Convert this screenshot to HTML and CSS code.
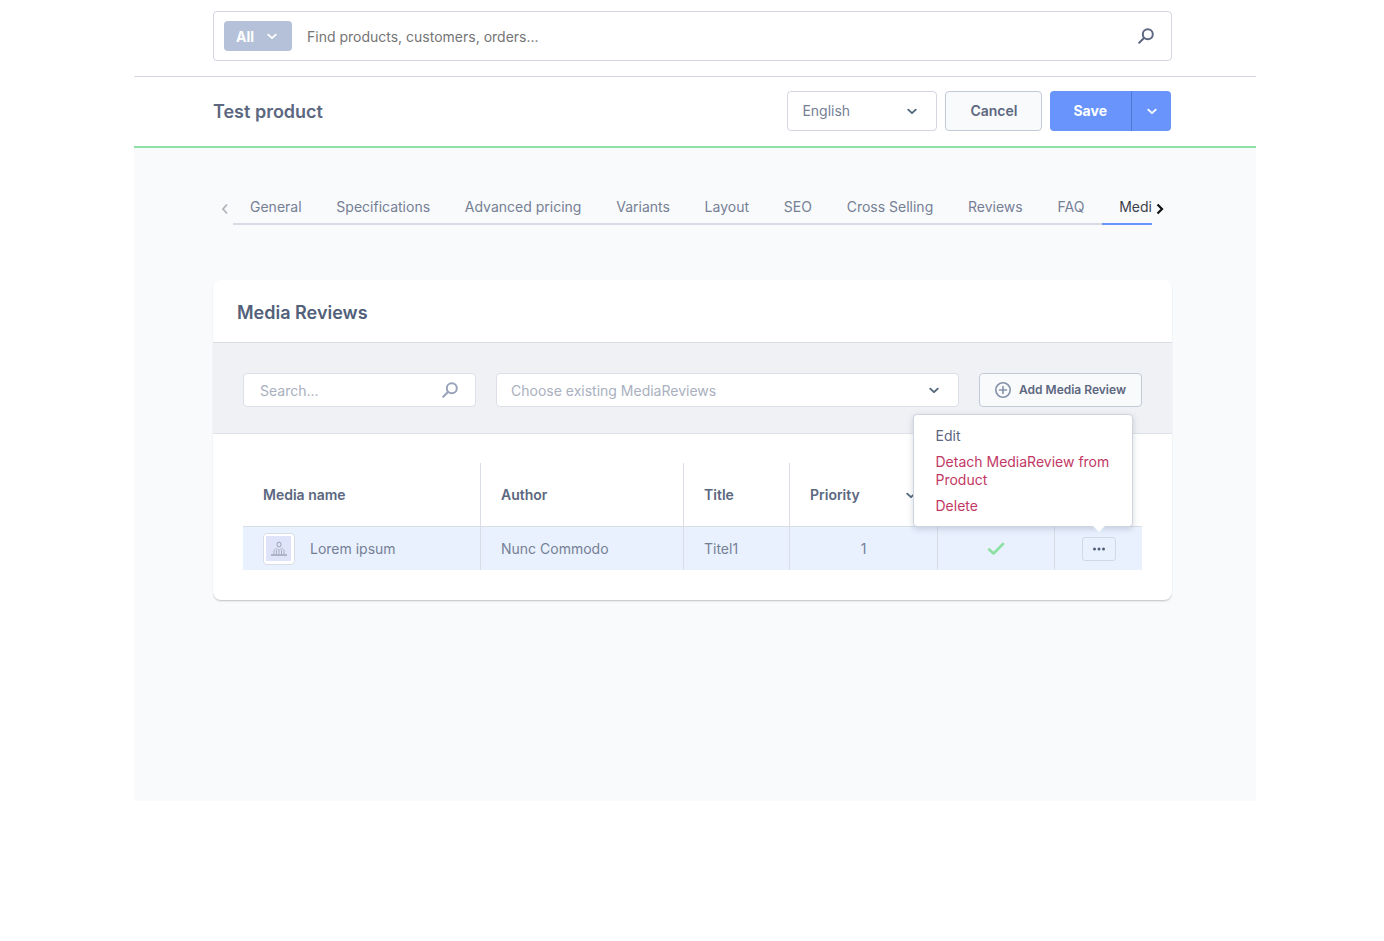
FILE: index.html
```html
<!DOCTYPE html>
<html lang="en">
<head>
<meta charset="utf-8">
<title>Test product</title>
<link rel="stylesheet" href="styles.css">
</head>
<body>
<svg class="sprite" aria-hidden="true">
  <symbol id="chevron" viewBox="0 0 12 12"><path d="M2.200 4.600 6 8.200l3.800-3.600" fill="none" stroke="currentColor" stroke-width="1.800" stroke-linecap="round" stroke-linejoin="round"/></symbol>
  <symbol id="search" viewBox="0 0 16 16"><circle cx="9.800" cy="6.200" r="5" fill="none" stroke="currentColor" stroke-width="2"/><path d="M6 10 1.200 14.800" fill="none" stroke="currentColor" stroke-width="2" stroke-linecap="round"/></symbol>
</svg>
<div class="app">
  <header class="topbar">
    <form class="global-search">
      <span class="picker picker-type">
        <select aria-label="Search scope"><option>All</option></select>
        <svg class="icon-chevron"><use href="#chevron"/></svg>
      </span>
      <input type="text" aria-label="Search" placeholder="Find products, customers, orders...">
      <button class="icon-button" type="button" aria-label="Search"><svg class="icon-search"><use href="#search"/></svg></button>
    </form>
  </header>
  <div class="titlebar">
    <h1>Test product</h1>
    <span class="picker picker-language">
      <select aria-label="Language"><option>English</option></select>
      <svg class="icon-chevron"><use href="#chevron"/></svg>
    </span>
    <button class="btn" type="button">Cancel</button>
    <div class="split">
      <button class="split-main" type="button">Save</button>
      <button class="split-more" type="button" aria-label="More save options"><svg class="icon-chevron"><use href="#chevron"/></svg></button>
    </div>
  </div>
  <main class="content">
    <div class="tabbar">
      <button class="tab-arrow tab-prev" type="button" aria-label="Previous tabs"><svg viewBox="0 0 8 12"><path d="M6 1.500 2 6l4 4.500" fill="none" stroke="currentColor" stroke-width="1.800"/></svg></button>
      <nav class="tabs">
        <a href="#">General</a>
        <a href="#">Specifications</a>
        <a href="#">Advanced pricing</a>
        <a href="#">Variants</a>
        <a href="#">Layout</a>
        <a href="#">SEO</a>
        <a href="#">Cross Selling</a>
        <a href="#">Reviews</a>
        <a href="#">FAQ</a>
        <a href="#" class="active">Medi</a>
      </nav>
      <button class="tab-arrow tab-next" type="button" aria-label="Next tabs"><svg viewBox="0 0 8 12"><path d="M1.500 1.500 6 6 1.500 10.500" fill="none" stroke="currentColor" stroke-width="2.200"/></svg></button>
    </div>
    <section class="card">
      <h2>Media Reviews</h2>
      <div class="toolbar">
        <div class="filter">
          <input type="text" aria-label="Search media reviews" placeholder="Search...">
          <svg class="icon-search"><use href="#search"/></svg>
        </div>
        <span class="picker picker-existing">
          <select aria-label="Existing media reviews"><option>Choose existing MediaReviews</option></select>
          <svg class="icon-chevron"><use href="#chevron"/></svg>
        </span>
        <button class="btn btn-small" type="button">
          <svg class="icon-plus" viewBox="0 0 16 16"><g fill="none" stroke="currentColor" stroke-width="1.600" stroke-linecap="round"><circle cx="8" cy="8" r="7.200"/><path d="M8 4.500v7M4.500 8h7"/></g></svg>
          Add Media Review
        </button>
      </div>
      <div class="grid-wrap">
        <table>
          <colgroup><col class="c-name"><col class="c-author"><col class="c-title"><col class="c-priority"><col class="c-active"><col class="c-menu"></colgroup>
          <thead>
            <tr>
              <th>Media name</th>
              <th>Author</th>
              <th>Title</th>
              <th><div class="sortable">Priority <svg class="icon-chevron"><use href="#chevron"/></svg></div></th>
              <th></th>
              <th></th>
            </tr>
          </thead>
          <tbody>
            <tr>
              <td>
                <div class="media">
                  <svg class="thumb" viewBox="0 0 32 32">
                    <rect x=".5" y=".5" width="31" height="31" rx="3.500" fill="#fff" stroke="#d8dde6"/>
                    <rect x="3" y="3" width="25" height="25" fill="#dfe4fa"/>
                    <g fill="none" stroke="#9a9fb0">
                      <ellipse cx="16" cy="11.500" rx="2" ry="2.500"/>
                      <path d="M13.500 15 11 17.500V21M18.500 15 21 17.500V21M14 15.500l2 2 2-2M13.500 21v-4M18.500 21v-4M16 17.500V21" stroke-width=".8"/>
                      <path d="M8 22h16" stroke-width="1.400"/>
                    </g>
                  </svg>
                  <span>Lorem ipsum</span>
                </div>
              </td>
              <td>Nunc Commodo</td>
              <td>Titel1</td>
              <td class="center">1</td>
              <td class="center"><svg class="icon-check" viewBox="0 0 18 14" role="img" aria-label="Active"><path d="M2.200 7.500 6.500 11.500 16 2" fill="none" stroke="#8be0a4" stroke-width="2.600" stroke-linecap="round" stroke-linejoin="round"/></svg></td>
              <td class="center">
                <div class="row-menu">
                  <button class="dots" type="button" aria-label="Row actions"><svg viewBox="0 0 14 4"><g fill="currentColor"><circle cx="2.500" cy="2" r="1.500"/><circle cx="7" cy="2" r="1.500"/><circle cx="11.500" cy="2" r="1.500"/></g></svg></button>
                  <div class="popover">
                    <button type="button">Edit</button>
                    <button class="danger" type="button">Detach MediaReview from Product</button>
                    <button class="danger" type="button">Delete</button>
                  </div>
                </div>
              </td>
            </tr>
          </tbody>
        </table>
      </div>
    </section>
  </main>
</div>
</body>
</html>
```
FILE: styles.css
```css
* { box-sizing: border-box; }

body {
  margin: 0;
  padding: 0 128px 0 134px;
  background: #fff;
  color: #758095;
  font: 14px/18px Inter, "Liberation Sans", sans-serif;
}

button, input, select { font: inherit; color: inherit; }
button { padding: 0; border: 0; background: none; cursor: pointer; }
svg { display: block; flex: none; }
.sprite { display: none; }
.icon-chevron { width: 12px; height: 12px; color: #52667a; }
.icon-search { width: 16px; height: 16px; }

.topbar {
  padding: 11px 84px 15px 79px;
  border-bottom: 1px solid #d3d6e0;
}

.global-search {
  display: flex;
  align-items: center;
  height: 50px;
  padding: 0 17px 0 10px;
  border: 1px solid #d3d6e0;
  border-radius: 4px;
}

.global-search input {
  flex: 1;
  min-width: 0;
  padding: 2px 15px 0;
  border: 0;
  outline: 0;
  background: none;
}
.global-search input::placeholder { color: #757575; }
.icon-button { color: #5c6780; }

/* Select with its own chevron stacked in the same grid cell */
.picker { display: grid; align-items: center; }
.picker > * { grid-area: 1 / 1; }
.picker select {
  width: 100%;
  height: 100%;
  padding: 0 14px;
  border: 1px solid #d3d6e0;
  border-radius: 4px;
  background: #fff;
  appearance: none;
}
.picker .icon-chevron {
  justify-self: end;
  margin-right: 19px;
  pointer-events: none;
}

.picker-type { width: 68px; height: 30px; }
.picker-type select {
  padding: 2px 12px 0;
  border: 0;
  background: #b5c1d9;
  color: #fff;
  font-weight: 700;
}
.picker-type .icon-chevron { margin-right: 14px; color: #fff; }

.titlebar {
  display: flex;
  align-items: center;
  gap: 8px;
  padding: 14px 85px 15px 79px;
  border-bottom: 2px solid #8fdfa8;
}

h1, h2 { margin: 0; font-size: 18px; line-height: 24px; font-weight: 600; }
h1 { flex: 1; padding-top: 2px; color: #5c6780; }

.picker-language { width: 150px; height: 40px; }

.btn {
  height: 40px;
  padding: 0 24px;
  border: 1px solid #c2cad8;
  border-radius: 4px;
  background: #f9fafb;
  color: #5c6780;
  font-weight: 600;
}

.split { display: flex; height: 40px; color: #fff; font-weight: 700; }
.split button { background: #6894fb; }
.split-main { padding: 0 24px 0 23px; border-radius: 4px 0 0 4px; }
.split .split-more {
  width: 40px;
  padding: 0 14px;
  border-left: 1px solid #5079d4;
  border-radius: 0 4px 4px 0;
}
.split .icon-chevron { color: #fff; }

.content {
  min-height: 653px;
  padding: 45px 84px 48px 79px;
  background: #f9fafc;
}

.tabbar { display: flex; align-items: flex-end; height: 32px; }
.tab-arrow { height: 32px; }
.tab-arrow svg { width: 8px; height: 12px; }
.tab-prev { width: 20px; padding-left: 8px; color: #b0b3ba; }
.tab-next { width: 20px; padding-left: 4px; color: #111; }

.tabs {
  flex: 1;
  display: flex;
  justify-content: space-between;
  min-width: 0;
  overflow: hidden;
  white-space: nowrap;
  box-shadow: inset 0 -2px #d8dbe4;
}
.tabs a {
  flex: none;
  padding: 2px 17px 7px;
  border-bottom: 2px solid transparent;
  color: inherit;
  text-decoration: none;
}
.tabs .active { padding-right: 0; border-color: #6894fb; color: #3b3f4d; }

.card {
  margin-top: 55px;
  border-radius: 8px;
  background: #fff;
  box-shadow: 0 1px 1px rgba(0, 0, 0, .14), 0 2px 2px rgba(0, 0, 0, .06);
}
.card h2 { padding: 21px 24px 17px; color: #52607a; }

.toolbar {
  display: flex;
  gap: 20px;
  padding: 30px 30px 26px;
  border-top: 1px solid #d9dce3;
  border-bottom: 1px solid #dfe2ea;
  background: #f0f1f5;
}
.filter {
  display: flex;
  align-items: center;
  width: 233px;
  height: 34px;
  padding: 0 17px 0 16px;
  border: 1px solid #dcdfe8;
  border-radius: 4px;
  background: #fff;
  color: #98a3b8;
}
.filter input {
  flex: 1;
  min-width: 0;
  padding: 2px 0 0;
  border: 0;
  outline: 0;
  background: none;
}
.filter input::placeholder { color: #a9b0c0; }
.picker-existing { flex: 1; height: 34px; color: #a9b0c0; }
.picker-existing select { padding-top: 2px; border-color: #dcdfe8; }

.btn-small {
  display: flex;
  align-items: center;
  gap: 8px;
  height: 34px;
  padding: 0 15px;
  font-size: 12px;
}
.icon-plus { width: 16px; height: 16px; color: #8592aa; }

.grid-wrap { padding: 29px 30px 30px; }
table { width: 100%; border-collapse: separate; border-spacing: 0; table-layout: fixed; }
.c-name { width: 238px; }
.c-author { width: 203px; }
.c-title { width: 106px; }
.c-priority { width: 148px; }
.c-active { width: 117px; }
.c-menu { width: 87px; }

th, td { padding: 0 20px; border-right: 1px solid #d8dde6; text-align: left; }
th:last-child, td:last-child { border-right: 0; }
th { height: 64px; border-bottom: 1px solid #d8dde6; color: #5c6780; font-weight: 600; }
td { height: 43px; background: #e9f1fe; }
.center { text-align: center; }
.sortable { display: flex; align-items: center; justify-content: space-between; }
.media { display: flex; align-items: center; gap: 15px; }
.thumb { width: 32px; height: 32px; }
.icon-check { width: 18px; height: 14px; margin: 0 auto; }

.row-menu { position: relative; width: 34px; margin: 0 auto; }
.dots {
  display: flex;
  align-items: center;
  justify-content: center;
  width: 34px;
  height: 24px;
  border: 1px solid #d3d9e3;
  border-radius: 3px;
  color: #52607a;
}
.dots svg { width: 14px; height: 4px; }

.popover {
  position: absolute;
  right: -17px;
  bottom: 34px;
  display: flex;
  flex-direction: column;
  gap: 8px;
  width: 220px;
  padding: 12px 22px 11px;
  border: 1px solid #cfd5de;
  border-radius: 4px;
  background: #fff;
  box-shadow: 0 2px 6px rgba(60, 75, 105, .22);
}
.popover::after {
  content: "";
  position: absolute;
  right: 27px;
  bottom: -6px;
  border: 6px solid transparent;
  border-top-color: #fff;
  border-bottom: 0;
}
.popover button { color: #5c6780; text-align: left; }
.popover .danger { color: #c23864; }
```
